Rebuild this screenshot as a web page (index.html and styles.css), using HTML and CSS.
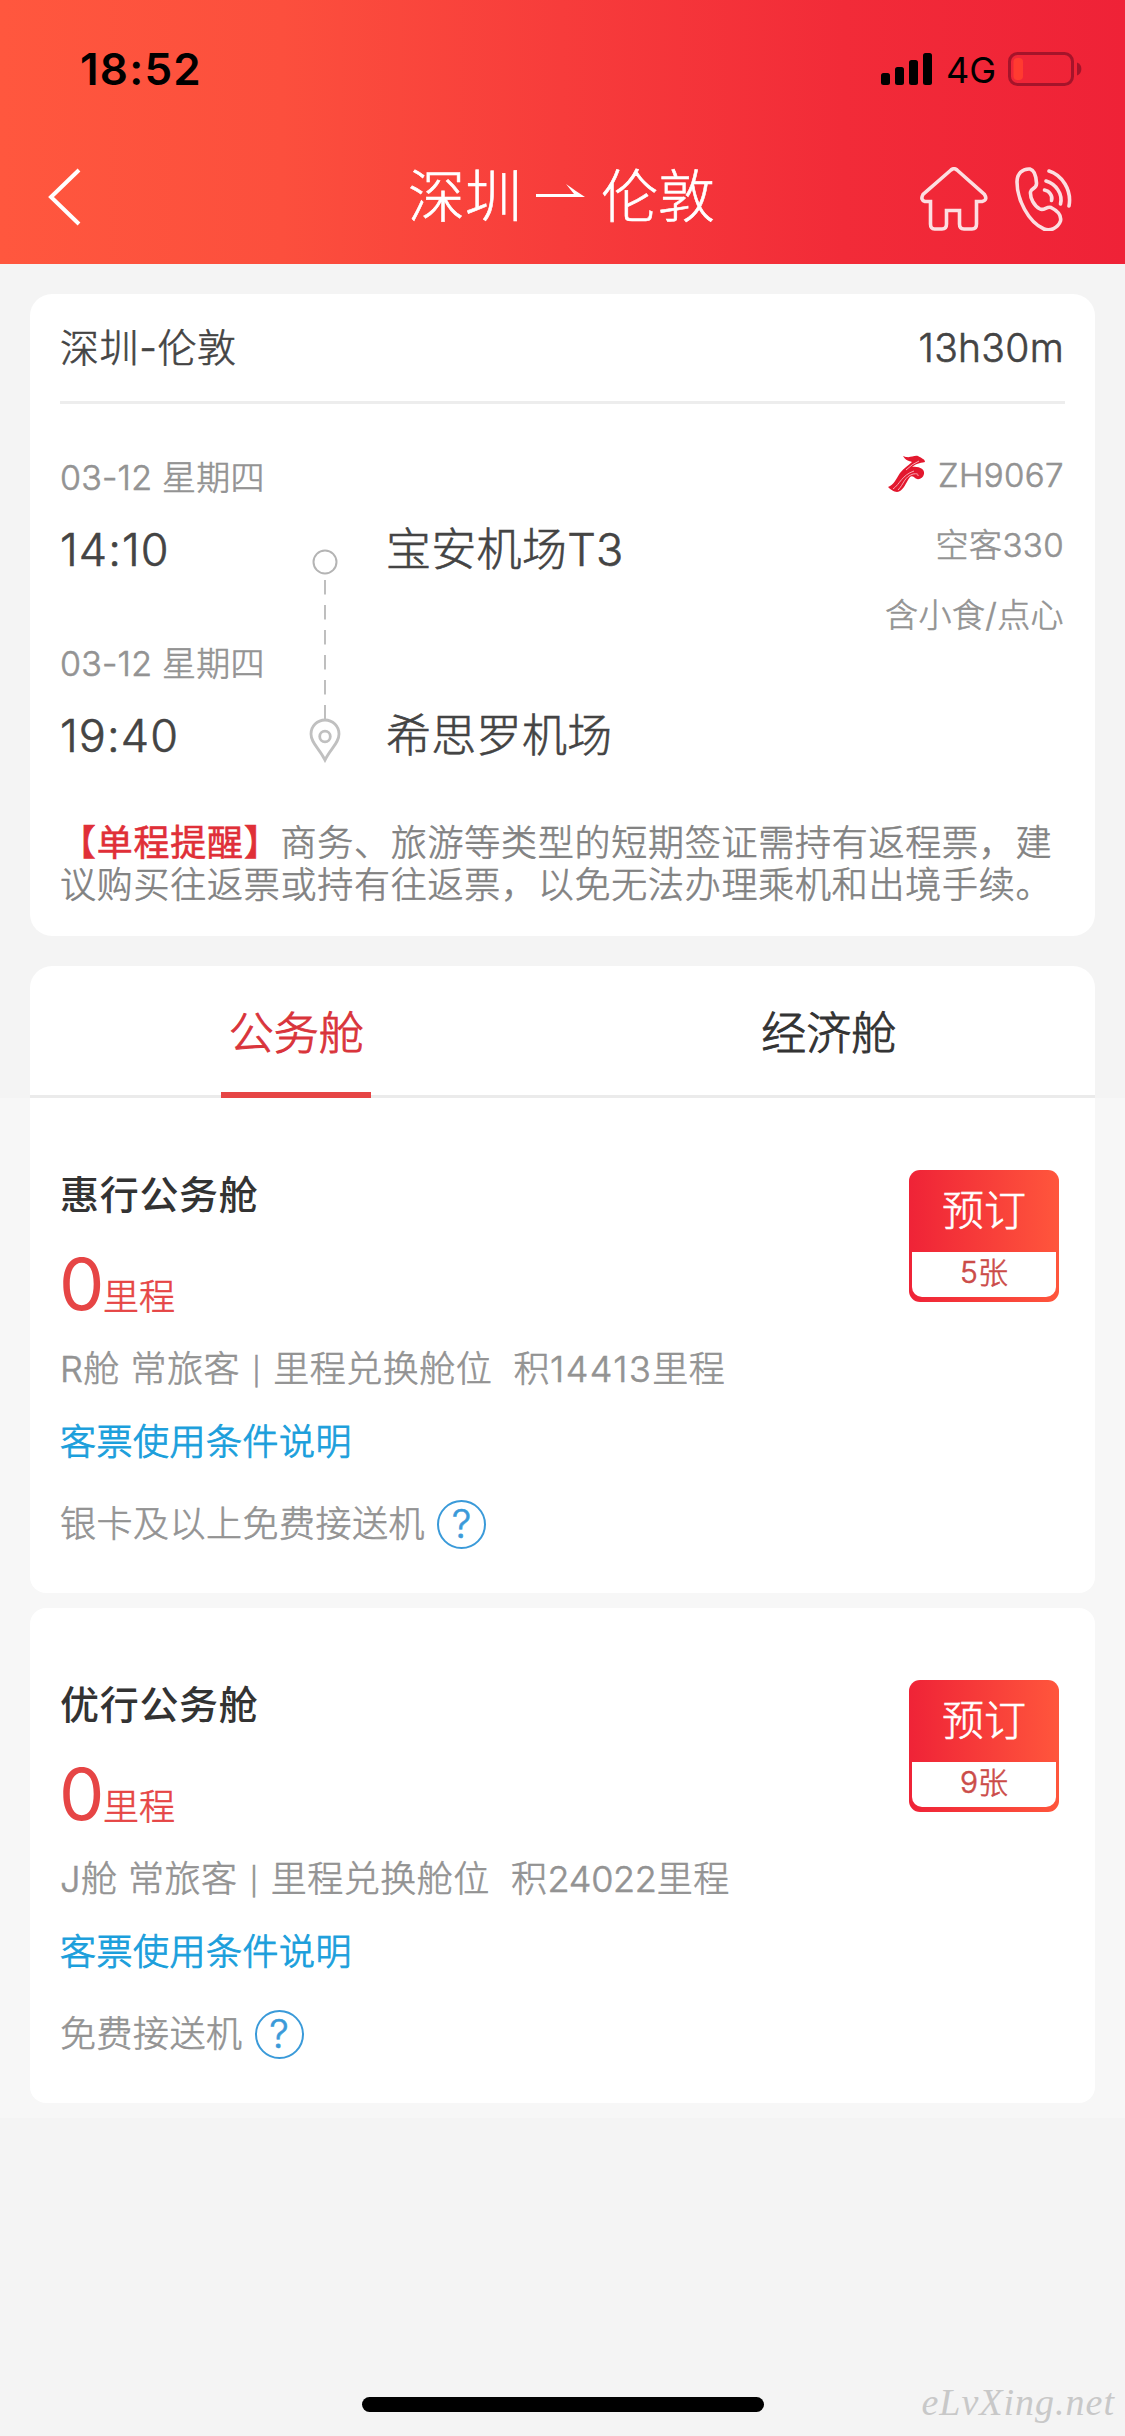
FILE: index.html
```html
<!DOCTYPE html>
<html lang="zh-CN">
<head>
<meta charset="utf-8">
<title>深圳-伦敦</title>
<link rel="stylesheet" href="styles.css">
</head>
<body>
<header class="topbar">
  <div class="status">
    <span class="clock">18:52</span>
    <svg class="signal" width="52" height="32" viewBox="0 0 52 32"><rect x="0" y="20" width="9" height="12" rx="2.5"/><rect x="14" y="14" width="9" height="18" rx="2.5"/><rect x="28" y="7" width="9" height="25" rx="2.5"/><rect x="42" y="0" width="9" height="32" rx="2.5"/></svg>
    <span class="network">4G</span>
    <svg class="battery" width="74" height="34" viewBox="0 0 74 34"><rect x="1.5" y="1.5" width="63" height="31" rx="8" fill="none" stroke="#a5142a" stroke-width="3"/><rect x="5.500" y="6" width="9.500" height="22" rx="4" fill="#ff3b30"/><path d="M69 10.500a7 7 0 0 1 0 13z" fill="#a5142a"/></svg>
  </div>
  <nav class="nav">
    <svg class="back" width="34" height="58" viewBox="0 0 34 58"><path d="M32 2L4 29L32 56" fill="none" stroke="#fff" stroke-width="4"/></svg>
    <h1 class="route"><span>深圳</span><svg class="arrow" width="50" height="16" viewBox="0 0 50 16"><path d="M0 10H38L30 0C37 5 43 9 49 13H0z" fill="#fff"/></svg><span>伦敦</span></h1>
    <svg class="home" width="68" height="64" viewBox="0 0 68 64"><path d="M31 3Q34 0.500 37 3L64.500 27.500Q68 33 62 34.500H56.500V57Q56.500 62 52 62H44Q39.500 62 39.500 57V43.500H26.500V57Q26.500 62 22 62H14.500Q10.500 62 10.500 57V34.500H5Q0 33 3 27.500Z"/></svg>
    <svg class="phone" width="58" height="64" viewBox="0 0 58 64"><path d="M15 2C7 1.500 2 7 2 15C2 32 13 55 29 62C35 64.500 43 61 45.500 54C46.500 49 43 44 36 40.500C32 39 29 44 25 42C19 39 15 31 15.500 25C16 21 22 22 21.500 16C21 8 19 3 15 2Z"/><path d="M34 4C47 8 57 23 54 39"/><path d="M31 14C41 17 48 27 45.500 37"/><path d="M29.500 23C34.500 24 38 29 36.500 33.500"/></svg>
  </nav>
</header>

<main>
  <section class="card flight">
    <div class="flight-head"><span>深圳-伦敦</span><span class="duration">13h30m</span></div>
    <div class="flight-body">
      <div class="times">
        <div class="stop"><p class="date">03-12 星期四</p><p class="time">14:10</p></div>
        <div class="stop"><p class="date">03-12 星期四</p><p class="time">19:40</p></div>
      </div>
      <svg class="timeline" width="32" height="216" viewBox="0 0 32 216"><g fill="none" stroke="#b4b4b4" stroke-width="2"><circle cx="16" cy="15" r="11.500"/><path d="M16 33V173" stroke-dasharray="14.500 10.500" stroke-width="1.700"/><path d="M16 213C10 201 2 196 2 187A14 14 0 0 1 30 187C30 196 22 201 16 213Z" stroke="#c0c0c0" stroke-width="2.800"/><circle cx="16" cy="189.500" r="5.300" stroke="#c0c0c0" stroke-width="2.800"/></g></svg>
      <div class="airports"><p>宝安机场T3</p><p>希思罗机场</p></div>
      <div class="meta">
        <p class="code"><svg width="38" height="38" viewBox="0 0 38 38"><path d="M15 1C22 4 25 0 30 1C33 3 37 4 37 7C31 8 28 9 24 12C31 11 37 14 36 19C35 24 29 26 26 22C23 20 22 22 20 25C17 30 15 36 9 37C6 37 2 34 0 32C6 30 8 24 12 18C16 13 21 10 24 7C21 6 17 5 15 1Z" fill="#e3182e"/><path d="M5 34C12 29 14 20 26 16M10 35C16 29 16 22 25 19Q31 18 30 21M18 15Q24 9 31 6" fill="none" stroke="#f9a9b2" stroke-width="1"/></svg><span>ZH9067</span></p>
        <p>空客330</p>
        <p>含小食/点心</p>
      </div>
    </div>
    <p class="notice"><em>【单程提醒】</em>商务、旅游等类型的短期签证需持有返程票，建议购买往返票或持有往返票，以免无法办理乘机和出境手续。</p>
  </section>

  <div class="tabs">
    <div class="tab active">公务舱</div>
    <div class="tab">经济舱</div>
  </div>

  <div class="fares">
    <article class="fare first">
      <div class="fare-info">
        <h2>惠行公务舱</h2>
        <p class="price"><b>0</b><span>里程</span></p>
        <p class="spec">R舱 常旅客 <span class="bar">|</span> 里程兑换舱位&nbsp; 积<span class="miles loose">14413</span>里程</p>
        <p class="terms">客票使用条件说明</p>
        <p class="benefit"><span>银卡及以上免费接送机</span><i class="help">?</i></p>
      </div>
      <div class="book"><span class="book-label">预订</span><span class="seats">5张</span></div>
    </article>
    <article class="fare">
      <div class="fare-info">
        <h2>优行公务舱</h2>
        <p class="price"><b>0</b><span>里程</span></p>
        <p class="spec">J舱 常旅客 <span class="bar">|</span> 里程兑换舱位&nbsp; 积<span class="miles">24022</span>里程</p>
        <p class="terms">客票使用条件说明</p>
        <p class="benefit"><span>免费接送机</span><i class="help">?</i></p>
      </div>
      <div class="book"><span class="book-label">预订</span><span class="seats">9张</span></div>
    </article>
  </div>
</main>

<footer class="bottom"><div class="home-bar"></div><span class="site">eLvXing.net</span></footer>
</body>
</html>
```
FILE: styles.css
```css
* { box-sizing: border-box; }
body, h1, h2, p { margin: 0; font-weight: inherit; }
body {
  width: 1125px;
  height: 2436px;
  display: flex;
  flex-direction: column;
  background: #f4f4f4;
  color: #444;
  font-family: Inter, "Noto Sans CJK SC", sans-serif;
  font-weight: 300;
  -webkit-text-stroke: .6px currentColor;
}
svg { display: block; flex: none; }

.topbar { height: 264px; background: linear-gradient(to right, #ff573e, #fc4f3d 25%, #f73c3b 50%, #f22b38 75%, #ef2237); }
.status { height: 124px; padding: 39px 43px 0 80px; display: flex; align-items: flex-start; color: #000; -webkit-text-stroke: 0; }
.clock { font-size: 44px; line-height: 60px; font-weight: 600; letter-spacing: 1.2px; margin-right: auto; }
.signal { margin: 14px 13px 0 0; }
.network { width: 51px; margin: 4px 11px 0 0; font-size: 36px; line-height: 54px; font-weight: 400; }
.battery { margin-top: 13px; }
.nav { height: 140px; display: flex; align-items: flex-start; padding: 43px 52px 0 47px; }
.back { margin-top: 1px; }
.route { width: 306px; margin-left: 327px; display: flex; color: #fff; font-size: 57px; line-height: 60px; white-space: nowrap; }
.arrow { margin: 17px 15px 0 14px; }
.home { margin-left: 206px; }
.phone { margin-left: 27px; }
.home, .phone { fill: none; stroke: #fff; stroke-width: 3.600; stroke-linecap: round; opacity: .85; }

.card { margin: 30px 30px 0; padding: 0 30px; border-radius: 22px; background: #fff; }
.flight { height: 642px; }
.flight-head { height: 110px; padding: 29px 1px 0 0; display: flex; justify-content: space-between; border-bottom: 3px solid #ededed; font-size: 39px; line-height: 50px; letter-spacing: .6px; }
.duration { letter-spacing: .3px; }
.flight-body { display: flex; height: 356px; padding-right: 1px; }
.times { width: 249px; padding-top: 54px; }
.stop { height: 186px; }
.date { color: #939393; font-size: 34px; line-height: 40px; letter-spacing: .2px; }
.time { margin-top: 27px; font-size: 45px; line-height: 50px; letter-spacing: 1.1px; }
.timeline { margin-top: 143px; }
.airports { margin-left: 45px; padding-top: 121px; font-size: 45px; line-height: 50px; letter-spacing: .3px; }
.airports p { height: 186px; }
.meta { flex: 1; padding-top: 51px; color: #939393; font-size: 33px; line-height: 40px; letter-spacing: .4px; text-align: right; }
.meta p { margin-bottom: 30px; }
.code { display: flex; justify-content: flex-end; gap: 12px; }
.notice { margin-top: 62px; color: #828282; font-size: 36px; line-height: 42px; letter-spacing: .75px; }
.notice em { color: #e02f38; font-style: normal; font-weight: 400; }

.tabs { margin: 30px 30px 0; height: 132px; display: flex; background: #fff; border-radius: 22px 22px 0 0; border-bottom: 3px solid #ebebeb; }
.tab { flex: 1; position: relative; padding-top: 38px; text-align: center; font-size: 45px; line-height: 60px; color: #333; -webkit-text-stroke-width: .9px; }
.tab.active { color: #d9343b; }
.tab.active::after { content: ""; position: absolute; left: 191px; bottom: -3px; width: 150px; height: 6px; background: #e64545; }

.fares { padding: 0 30px 15px; background: #f7f7f7; display: flex; flex-direction: column; gap: 15px; }
.fare { height: 495px; padding: 72px 36px 0 30px; display: flex; justify-content: space-between; align-items: flex-start; background: #fff; border-radius: 16px; }
.fare.first { border-radius: 0 0 16px 16px; }
.fare h2 { font-size: 39px; line-height: 50px; letter-spacing: .7px; font-weight: 500; color: #333; -webkit-text-stroke: 0; }
.price { margin-top: 24px; height: 80px; display: flex; align-items: baseline; color: #e64545; font-size: 36px; line-height: 40px; }
.price b { margin-left: -1px; font-size: 72px; line-height: 80px; font-weight: 400; letter-spacing: -1.5px; -webkit-text-stroke: 0; }
.spec, .terms, .benefit { font-size: 36px; line-height: 44px; letter-spacing: .5px; color: #939393; }
.spec { margin-top: 23px; }
.bar { display: inline-block; width: 12px; font-size: 27px; line-height: 1; text-align: center; vertical-align: 1px; }
.miles { letter-spacing: -.3px; }
.miles.loose { letter-spacing: 1.5px; }
.terms { margin-top: 29px; color: #1b9fdc; -webkit-text-stroke-width: .9px; }
.benefit { margin-top: 36px; height: 48px; display: flex; align-items: center; gap: 12px; }
.help { width: 49px; height: 49px; border: 2.500px solid #3a9ad9; border-radius: 50%; color: #3a9ad9; font-size: 39px; line-height: 44px; font-style: normal; text-align: center; letter-spacing: 0; }
.book { width: 150px; height: 132px; padding: 0 3px 5px; border-radius: 11px; background: linear-gradient(to right, #ef2337, #ff563c); text-align: center; }
.book-label { display: block; height: 82px; padding-top: 11px; font-size: 42px; line-height: 60px; color: #fff; }
.seats { display: block; height: 45px; background: #fff; border-radius: 0 0 10px 10px; color: #cb4b48; font-size: 30px; line-height: 40px; }

.bottom { position: relative; margin-top: auto; height: 60px; padding-top: 21px; -webkit-text-stroke: 0; }
.home-bar { width: 402px; height: 15px; margin: 0 auto; border-radius: 8px; background: #000; }
.site { position: absolute; right: 10px; top: 2px; color: #c8c8c8; font: italic 38px/48px "Liberation Serif", serif; letter-spacing: 1px; }
```
